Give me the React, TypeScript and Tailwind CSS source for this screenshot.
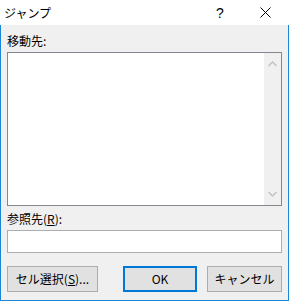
import React from "react";

const font = { fontFamily: '"Noto Sans CJK JP", "Noto Sans", sans-serif' };

export default function App() {
  return (
    <div className="w-[289px] h-[301px] flex flex-col bg-white text-[12px] text-black" style={font}>
      {/* title bar */}
      <div className="h-[25px] flex items-center bg-white shrink-0">
        <div className="pl-[4px] text-[12px] leading-none">ジャンプ</div>
        <div className="ml-auto w-[26px] mr-[18px] flex justify-center text-[14px] leading-none" style={{ fontFamily: '"Liberation Sans", sans-serif' }}>?</div>
        <div className="w-[28px] mr-[10px] flex justify-center">
          <svg width="11" height="11" viewBox="0 0 11 11">
            <path d="M0.5 0.5 L10.5 10.5 M10.5 0.5 L0.5 10.5" stroke="#000" strokeWidth="1" fill="none" />
          </svg>
        </div>
      </div>
      {/* body */}
      <div className="flex-1 bg-[#f0f0f0] border-l border-r border-b border-[#1a86d8] pl-[6px] pr-[6px] flex flex-col">
        <div className="h-[27px] flex items-center pt-[4px] leading-none">移動先:</div>
        <div className="h-[154px] border border-[#828790] bg-white flex">
          <div className="flex-1" />
          <div className="w-[17px] bg-[#f0f0f0] flex flex-col items-center justify-between py-[8px]">
            <svg width="9" height="6" viewBox="0 0 9 6">
              <path d="M0.5 5 L4.5 1 L8.5 5" stroke="#c2c2c2" strokeWidth="1.4" fill="none" />
            </svg>
            <svg width="9" height="6" viewBox="0 0 9 6">
              <path d="M0.5 1 L4.5 5 L8.5 1" stroke="#c2c2c2" strokeWidth="1.4" fill="none" />
            </svg>
          </div>
        </div>
        <div className="h-[24px] flex items-center pt-[2px] leading-none">
          参照先(<span className="underline">R</span>):
        </div>
        <div className="h-[23px] border border-[#abadb3] bg-white" />
        <div className="flex mt-[13px] h-[26px]">
          <button className="w-[91px] h-[26px] bg-[#e1e1e1] border border-[#adadad] text-[12px] leading-none" style={font}>
            セル選択(<span className="underline">S</span>)...
          </button>
          <button className="ml-[25px] w-[74px] h-[26px] bg-[#e1e1e1] border-2 border-[#0078d7] text-[12px] leading-none" style={font}>
            OK
          </button>
          <button className="ml-[10px] w-[75px] h-[26px] bg-[#e1e1e1] border border-[#adadad] text-[12px] leading-none" style={font}>
            キャンセル
          </button>
        </div>
      </div>
    </div>
  );
}
